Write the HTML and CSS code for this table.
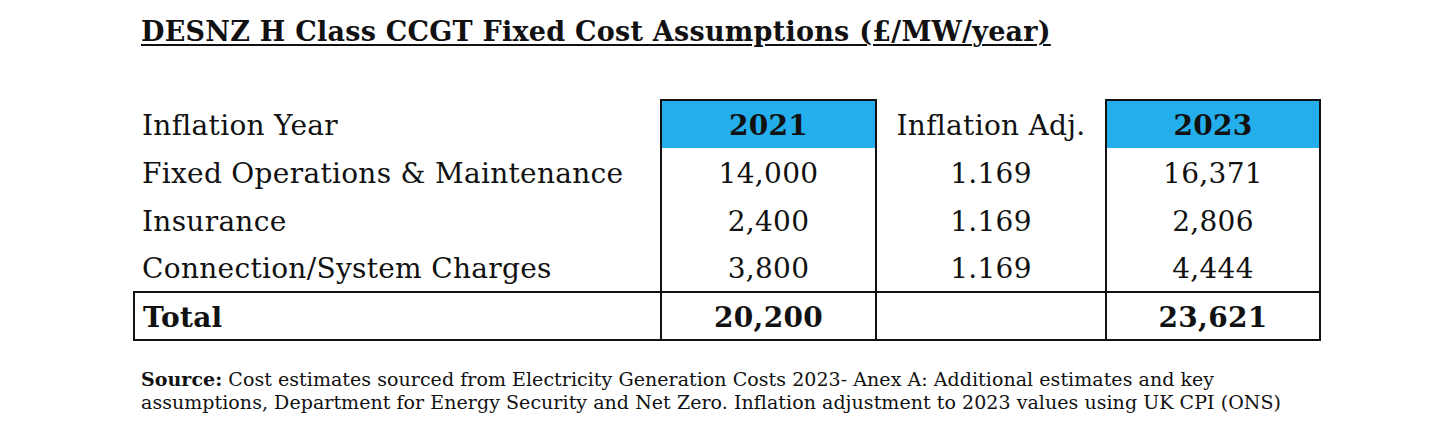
FILE: index.html
```html
<!DOCTYPE html>
<html>
<head>
<meta charset="utf-8">
<link rel="stylesheet" href="styles.css">
</head>
<body>
<div class="page">
  <h1 class="title">DESNZ H Class CCGT Fixed Cost Assumptions (£/MW/year)</h1>
  <table class="costs">
    <colgroup>
      <col class="c-label"><col class="c-num"><col class="c-adj"><col class="c-num2">
    </colgroup>
    <tr class="head">
      <td class="label">Inflation Year</td>
      <td class="box hl">2021</td>
      <td class="mid">Inflation Adj.</td>
      <td class="box hl">2023</td>
    </tr>
    <tr>
      <td class="label">Fixed Operations &amp; Maintenance</td>
      <td class="box">14,000</td>
      <td class="mid">1.169</td>
      <td class="box">16,371</td>
    </tr>
    <tr>
      <td class="label">Insurance</td>
      <td class="box">2,400</td>
      <td class="mid">1.169</td>
      <td class="box">2,806</td>
    </tr>
    <tr>
      <td class="label">Connection/System Charges</td>
      <td class="box">3,800</td>
      <td class="mid">1.169</td>
      <td class="box">4,444</td>
    </tr>
    <tr class="total">
      <td class="label">Total</td>
      <td class="box">20,200</td>
      <td class="mid"></td>
      <td class="box">23,621</td>
    </tr>
  </table>
  <p class="source"><b>Source:</b> Cost estimates sourced from Electricity Generation Costs 2023- Anex A: Additional estimates and key assumptions, Department for Energy Security and Net Zero. Inflation adjustment to 2023 values using UK CPI (ONS)</p>
</div>
</body>
</html>
```

FILE: styles.css
```css
html, body {
  margin: 0;
  padding: 0;
  background: #ffffff;
}
body {
  font-family: "DejaVu Serif", "Liberation Serif", serif;
  color: #111111;
}
.page {
  padding: 14px 0 0 133px;
  width: 1186px;
}
.title {
  margin: 0 0 0 8px;
  font-size: 27px;
  font-weight: bold;
  line-height: 36px;
  text-decoration: underline;
  text-decoration-thickness: 2px;
  text-underline-offset: 3px;
  letter-spacing: 0.25px;
}
.costs {
  margin-top: 49px;
  border-collapse: collapse;
  table-layout: fixed;
  width: 1186px;
  font-size: 28px;
  letter-spacing: 0.3px;
}
.c-label { width: 527px; }
.c-num { width: 215px; }
.c-adj { width: 230px; }
.c-num2 { width: 214px; }
.costs td {
  height: 48px;
  padding: 3px 0 0 0;
  box-sizing: border-box;
  vertical-align: middle;
  text-align: center;
  line-height: 40px;
}
.costs td.label {
  text-align: left;
  padding-left: 8px;
}
.costs td.box {
  border-left: 2px solid #111;
  border-right: 2px solid #111;
}
.costs td.hl {
  background: #24aeeb;
  border-top: 2px solid #111;
  font-weight: bold;
}
.costs tr.total td {
  border-top: 2px solid #111;
  border-bottom: 2px solid #111;
  font-weight: bold;
}
.costs tr.total td.label {
  border-left: 2px solid #111;
}
.costs tr.total td:last-child {
  border-right: 2px solid #111;
}
.source {
  margin: 27px 0 0 8px;
  font-size: 19px;
  line-height: 23px;
  width: 1170px;
  letter-spacing: 0.05px;
}
```
